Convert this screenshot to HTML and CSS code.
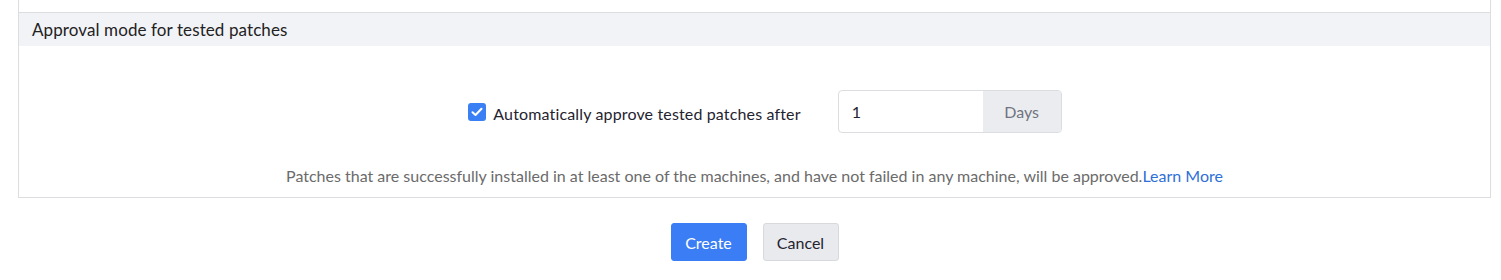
FILE: index.html
```html
<!DOCTYPE html>
<html>
<head>
<meta charset="utf-8">
<link rel="stylesheet" href="styles.css">
</head>
<body>
<div class="panel">
  <div class="panel-prev"></div>
  <div class="section-header">Approval mode for tested patches</div>
  <div class="section-body">
    <div class="row">
      <label class="check-label">
        <span class="checkbox">
          <svg width="12" height="10" viewBox="0 0 12 10"><path d="M1.5 5.2 L4.5 8 L10.5 1.8" fill="none" stroke="#fff" stroke-width="2" stroke-linecap="round" stroke-linejoin="round"/></svg>
        </span>
        <span class="check-text">Automatically approve tested patches after</span>
      </label>
      <div class="input-group">
        <div class="input">1</div>
        <div class="addon">Days</div>
      </div>
    </div>
    <p class="help">Patches that are successfully installed in at least one of the machines, and have not failed in any machine, will be approved.<a href="#" class="link">Learn More</a></p>
  </div>
</div>
<div class="actions">
  <button class="btn btn-primary">Create</button>
  <button class="btn btn-secondary">Cancel</button>
</div>
</body>
</html>
```
FILE: styles.css
```css
html, body {
  margin: 0;
  padding: 0;
  background: #ffffff;
  font-family: Lato, "Open Sans", sans-serif;
  color: #222222;
}
.panel {
  margin: 0 10px 0 18px;
  border-left: 1px solid #dcdde1;
  border-right: 1px solid #dcdde1;
  border-bottom: 1px solid #dcdde1;
}
.panel-prev {
  height: 12px;
}
.section-header {
  border-top: 1px solid #dcdde1;
  background: #f2f3f7;
  height: 33px;
  line-height: 34px;
  padding-left: 13px;
  font-size: 17px;
  letter-spacing: 0.1px;
  color: #222222;
}
.section-body {
  padding: 44px 0 11px;
}
.row {
  display: flex;
  align-items: center;
  justify-content: center;
  height: 43px;
  padding-left: 21px;
}
.check-label {
  display: flex;
  align-items: center;
  gap: 7px;
  font-size: 16px;
  color: #1f2430;
  margin-right: 37px;
}
.check-text {
  padding-top: 3px;
  letter-spacing: 0.15px;
}
.checkbox {
  width: 18px;
  height: 18px;
  border-radius: 3px;
  background: #3b7ff5;
  display: flex;
  align-items: center;
  justify-content: center;
}
.input-group {
  display: flex;
  width: 224px;
  height: 43px;
  box-sizing: border-box;
  border: 1px solid #dcdde1;
  border-radius: 4px;
  overflow: hidden;
}
.input {
  flex: 1;
  padding-left: 13px;
  line-height: 41px;
  font-size: 16px;
  color: #1f2430;
}
.addon {
  width: 78px;
  background: #ebecf0;
  color: #6f7480;
  font-size: 16px;
  line-height: 41px;
  text-align: center;
}
.help {
  margin: 33px 0 0;
  text-align: center;
  font-size: 16px;
  line-height: 20px;
  color: #6b6b6b;
}
.link {
  color: #2e6fd8;
  text-decoration: none;
}
.actions {
  display: flex;
  justify-content: center;
  gap: 16px;
  margin: 25px 10px 0 18px;
}
.btn {
  height: 38px;
  width: 76px;
  border-radius: 3px;
  font-family: Lato, "Open Sans", sans-serif;
  font-size: 16px;
  cursor: pointer;
}
.btn-primary {
  background: #3a7df5;
  border: 1px solid #3a7df5;
  color: #ffffff;
}
.btn-secondary {
  background: #e9eaee;
  border: 1px solid #d8d9dd;
  color: #1f2430;
}
```
